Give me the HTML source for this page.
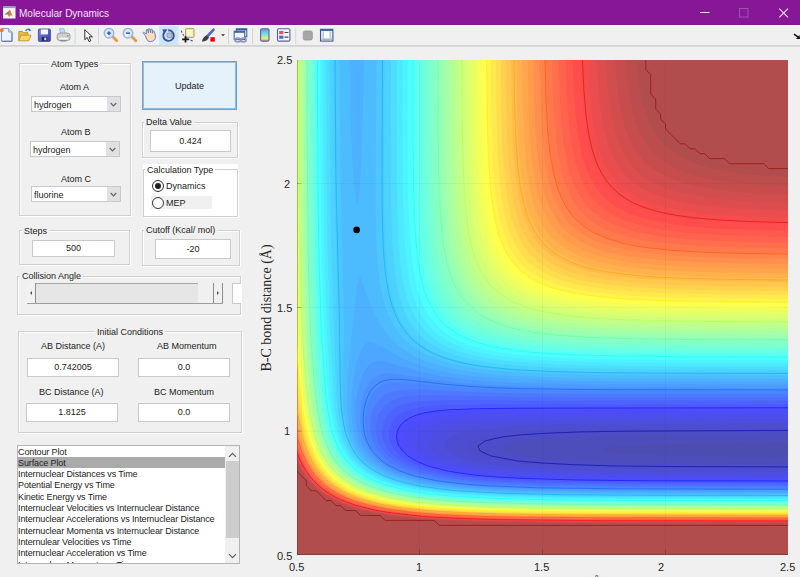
<!DOCTYPE html>
<html><head><meta charset="utf-8"><title>Molecular Dynamics</title>
<style>
*{margin:0;padding:0;box-sizing:border-box}
html,body{width:800px;height:577px;overflow:hidden;background:#f0f0f0;font-family:"Liberation Sans",sans-serif;color:#222}
.abs{position:absolute}
.title{left:0;top:0;width:800px;height:25px;background:#881798}
.ttext{left:19px;top:6px;font-size:10px;line-height:16px;color:#f2e3f4}
.tb{left:0;top:25px;width:800px;height:21px;background:#f0f0f0;border-bottom:1px solid #d9d9d9}
.sep{top:28px;width:1px;height:15px;background:#d0d0d0}
.plot{position:absolute;left:0;top:0}
.lbl{font-size:9px;line-height:10px;white-space:nowrap;color:#222}
.panel{border:1px solid #d0d0d0;box-shadow:inset 1px 1px 0 #fff,1px 1px 0 #fff}
.ptitle{font-size:9px;line-height:10px;background:#f0f0f0;padding:0 2px;white-space:nowrap}
.edit{background:#fff;border:1px solid #c9c9c9;font-size:9px;text-align:center;white-space:nowrap}
.pop{background:#fff;border:1px solid #c6c8d0;font-size:9px;white-space:nowrap}
.pop .arr{position:absolute;right:0;top:0;bottom:0;width:13px;background:#e1e1e1}
.tick{font-size:11px;line-height:12px;color:#262626;white-space:nowrap}
.list{background:#fff;border:1px solid #b4b4b4}
.li{position:absolute;left:0px;font-size:9px;line-height:11px;letter-spacing:-0.12px;white-space:nowrap;color:#222}
</style></head><body>
<div class="abs title"></div>
<div class="abs ttext">Molecular Dynamics</div>
<div class="abs tb"></div>
<svg class="abs" style="left:0;top:0" width="800" height="50" viewBox="0 0 800 50">
<defs>
<linearGradient id="cbar" x1="0" y1="0" x2="0" y2="1">
<stop offset="0" stop-color="#8a84e0"/><stop offset="0.45" stop-color="#6ee6e0"/><stop offset="0.78" stop-color="#f2ea70"/><stop offset="1" stop-color="#f09a5a"/>
</linearGradient>
<linearGradient id="flop" x1="0" y1="0" x2="1" y2="1">
<stop offset="0" stop-color="#7a80e8"/><stop offset="1" stop-color="#3a40a8"/>
</linearGradient>
</defs>
<!-- title icon -->
<rect x="3" y="6.5" width="12.5" height="12" fill="#f6f6f6"/>
<rect x="3" y="6.5" width="12.5" height="1.6" fill="#8aa2b8"/>
<path d="M4.5,14.5 L7.8,12 L9.8,9.5 L12.8,16.5 L11,15 L9,17 L7.6,14.2 Z" fill="#e8782a"/>
<path d="M4.5,14.5 L7.8,12 L9.2,13.2 L7.6,14.2 Z" fill="#3a8ad0"/>
<!-- window buttons -->
<line x1="700" y1="12.5" x2="709.5" y2="12.5" stroke="#f2e2f4" stroke-width="1"/>
<rect x="739.5" y="8.5" width="8.5" height="8.5" fill="none" stroke="#9c55a9" stroke-width="1"/>
<path d="M779.3,8.6 L788,17.3 M788,8.6 L779.3,17.3" stroke="#f2e2f4" stroke-width="1.1"/>
<!-- toolbar top highlight & bottom line -->
<rect x="0" y="25" width="800" height="1.2" fill="#f7f9f7"/>
<rect x="0" y="45.5" width="800" height="1.2" fill="#cfcfcf"/>
<!-- separators -->
<g fill="#d6d6d6"><rect x="74.6" y="28" width="1" height="16"/><rect x="98" y="28" width="1" height="16"/><rect x="228" y="28" width="1" height="16"/><rect x="252" y="28" width="1" height="16"/><rect x="295.2" y="28" width="1" height="16"/></g>
<!-- new doc -->
<path d="M1.5,28.6 H8.6 L12,32 V41 H1.5 Z" fill="#eef4fc" stroke="#8393c4" stroke-width="1"/>
<path d="M12,32.5 V41.5 H2" fill="none" stroke="#6a78ae" stroke-width="1"/>
<path d="M8.6,28.6 V32 H12" fill="#c9d3ea" stroke="#8393c4" stroke-width="0.8"/>
<circle cx="1.8" cy="30.3" r="2" fill="#f07a3a"/>
<!-- open folder -->
<path d="M18.8,40.8 V31.5 H22.5 L23.5,32.7 H28 V35" fill="#e6bd48" stroke="#bf972c" stroke-width="1"/>
<path d="M18.8,40.8 L21,35.2 H31 L28.8,40.8 Z" fill="#fad868" stroke="#c49a30" stroke-width="1"/>
<path d="M25.5,31 Q27.5,28.3 30,29.8" fill="none" stroke="#5a78b8" stroke-width="1.3"/>
<path d="M29,28.6 L31.2,30.3 L28.8,31.6 Z" fill="#4a64a8"/>
<!-- save -->
<rect x="38.4" y="29" width="12" height="12.4" rx="1" fill="url(#flop)" stroke="#3a3e98" stroke-width="0.8"/>
<rect x="40.8" y="29.4" width="7.2" height="5" fill="#f4f5fb"/>
<rect x="41.8" y="37" width="5.5" height="3.8" fill="#23264a"/>
<rect x="44.3" y="37.6" width="2" height="2.6" fill="#d8dae8"/>
<!-- print -->
<path d="M59.3,28.7 H63.8 L65.6,33.5 H60.8 Z" fill="#bcdcf8" stroke="#98b0cc" stroke-width="0.8"/>
<path d="M57.2,35.5 Q57.2,33 60,33 H67 Q70,33 70,35.5 V38.5 Q70,40.5 67.5,40.5 H59.7 Q57.2,40.5 57.2,38.5 Z" fill="#cfcfcf" stroke="#8e8e8e" stroke-width="0.8"/>
<rect x="59.2" y="37.8" width="8.6" height="1.6" fill="#f4f4f4"/>
<rect x="60.5" y="40" width="6" height="1.5" fill="#8a8a8a"/>
<circle cx="67.8" cy="35.8" r="0.8" fill="#3ea04a"/>
<!-- arrow -->
<path d="M84.8,29.7 V39.7 L87.2,37.4 L89,41.6 L90.8,40.8 L89,36.8 H92.4 Z" fill="#fff" stroke="#2e2e2e" stroke-width="1" stroke-linejoin="round"/>
<!-- zoom in -->
<line x1="112.6" y1="36.6" x2="116.8" y2="40.8" stroke="#e69a3e" stroke-width="2.8" stroke-linecap="round"/>
<circle cx="109" cy="33.2" r="4.8" fill="#cbeaf4" stroke="#a8a8e2" stroke-width="1.3"/><circle cx="107.6" cy="35" r="1.6" fill="#f4fbff"/>
<path d="M109,31 L111.2,33.2 L109,35.4 L106.8,33.2 Z" fill="#4a68aa"/>
<!-- zoom out -->
<line x1="131.6" y1="36.6" x2="135.8" y2="40.8" stroke="#e69a3e" stroke-width="2.8" stroke-linecap="round"/>
<circle cx="128" cy="33.2" r="4.8" fill="#cbeaf4" stroke="#a8a8e2" stroke-width="1.3"/><circle cx="126.6" cy="35" r="1.6" fill="#f4fbff"/>
<path d="M126,33.2 H130" stroke="#4866a8" stroke-width="1.6"/>
<!-- pan hand -->
<path d="M145.2,35.3 L143.4,33.6 Q142.6,32.6 143.6,32.2 L146.3,34 V29.8 Q147,28.9 147.8,29.7 L148.4,33 V29 Q149.2,28.1 150,29 L150.6,33 V29.5 Q151.4,28.7 152.2,29.6 L152.6,33.2 V31.3 Q153.4,30.6 154.2,31.4 L155.6,36 Q155.6,41.2 150.6,41.6 H149 Q146.8,41.2 145.2,35.3 Z" fill="#f8dcb8" stroke="#6d7ed0" stroke-width="1" stroke-linejoin="round"/>
<!-- rotate (active) -->
<rect x="159" y="26" width="19.5" height="19" fill="#cde5f8"/>
<path d="M168.2,30.3 A5.3,5.3 0 1 1 164.3,32.4" fill="none" stroke="#3c5494" stroke-width="1.9"/>
<path d="M162.2,29.6 L167.4,29.2 L164.6,34 Z" fill="#3c5494"/>
<path d="M167,33.6 L169.6,32.8 L172,33.6 V37 L169.6,38 L167,37 Z" fill="#b3bfd8" stroke="#6d7cab" stroke-width="0.6"/>
<!-- data cursor -->
<rect x="185.6" y="28.6" width="8.4" height="8.8" rx="1" fill="#eeeaa8" stroke="#a9a060" stroke-width="1"/>
<rect x="187" y="30" width="5.6" height="6" fill="#f8f6d0"/>
<path d="M181.3,30.7 Q183.5,38.5 193.5,41.2" fill="none" stroke="#3c3cf0" stroke-width="1.1" stroke-dasharray="2,1.5"/>
<path d="M182.2,39.4 H188.8 M185.5,36.2 V42.6" stroke="#101010" stroke-width="1.7"/>
<!-- brush -->
<line x1="213.6" y1="29.6" x2="207.6" y2="36" stroke="#5662c4" stroke-width="2.6" stroke-linecap="round"/>
<path d="M206.5,35.3 L209,37.6 Q206.8,41.8 202,41.6 Q202.4,37.4 206.5,35.3 Z" fill="#3e3e3e"/>
<rect x="210.4" y="37.2" width="4.4" height="4.4" fill="#f00000"/>
<path d="M221,34.2 H225 L223,36.3 Z" fill="#333"/>
<!-- link -->
<rect x="236.3" y="28.8" width="10.5" height="8" fill="#e2e9f5" stroke="#3d5aa2" stroke-width="1"/>
<rect x="236.3" y="28.8" width="10.5" height="1.6" fill="#3d5aa2"/>
<rect x="234.2" y="31.2" width="10.5" height="8.5" fill="#f2f5fb" stroke="#3d5aa2" stroke-width="1"/>
<rect x="234.2" y="31.2" width="10.5" height="1.6" fill="#3d5aa2"/>
<ellipse cx="237.8" cy="40" rx="2.8" ry="2" fill="none" stroke="#8594b6" stroke-width="1.4"/>
<ellipse cx="243.5" cy="40" rx="2.8" ry="2" fill="none" stroke="#8594b6" stroke-width="1.4"/>
<!-- colorbar -->
<rect x="260.6" y="28.7" width="8.4" height="12.4" rx="1.4" fill="url(#cbar)" stroke="#55649c" stroke-width="1.1"/>
<!-- legend -->
<rect x="277.5" y="28.7" width="12.4" height="12.4" rx="1.4" fill="#f3f5fa" stroke="#55649c" stroke-width="1.1"/>
<rect x="279.2" y="30.9" width="4.2" height="3.2" fill="#e85454"/>
<rect x="279.2" y="35.6" width="4.2" height="3.2" fill="#5a62e6"/>
<path d="M284.6,32.5 H288.4 M284.6,37.2 H288.4" stroke="#484848" stroke-width="1.2"/>
<!-- hide axes -->
<rect x="303.3" y="31" width="9" height="9" rx="1.6" fill="#a6a6a6" stroke="#959595" stroke-width="0.8"/>
<!-- plot tools -->
<rect x="320.5" y="29.3" width="12.4" height="11.8" fill="#e4e9f3" stroke="#3d5aa2" stroke-width="1.1"/>
<rect x="320.5" y="29.3" width="12.4" height="1.6" fill="#3d5aa2"/>
<rect x="322.6" y="31.6" width="1.4" height="7" fill="#b7c0d6"/>
<rect x="329.4" y="31.6" width="1.4" height="7" fill="#b7c0d6"/>
<rect x="323.8" y="31.6" width="5.6" height="6.2" fill="#ffffff"/>
<rect x="321.5" y="38.6" width="10.4" height="1.6" fill="#b6b6b6"/>
<!-- dock arrow -->
<path d="M794,34.2 L798.5,37.4" stroke="#111" stroke-width="1.6"/>
<path d="M800,39 L796,39 L799.6,35 Z" fill="#111"/>
</svg>
<svg class="plot" width="800" height="577" viewBox="0 0 800 577">
<defs><clipPath id="pc"><rect x="297" y="60" width="491" height="495"/></clipPath></defs>
<g clip-path="url(#pc)">
<g fill-rule="evenodd">
<rect x="296" y="59" width="493" height="497" fill="#4d4db1"/>
<path fill="#4d4dbc" d="M789,556 296,556 296,59 789,59 789,443.4 702.1,444 652,445.1 630,446 616.5,447 608.5,448 604.3,449 603.2,450 604.9,451 609.7,452 618.2,453 632,454 655.4,455 703.4,456 789,456.6 789,556Z"/>
<path fill="#4d4dc7" d="M789,556 296,556 296,59 789,59 789,434.4 646,435.1 600,435.9 567.2,437 540,438.8 521.5,441 515,442.3 509,444 505.1,446 503.6,448 504.3,450 507.1,452 512.3,454 520.6,456 541.9,459 568.4,461 601,462.3 644,463.2 789,464 789,556Z"/>
<path fill="#4d4dd2" d="M789,556 296,556 296,59 789,59 789,428.5 615,429.3 566,430.2 530,431.6 502,434 483.9,437 477,439 471,441.8 468.5,444 467.9,445 467.5,447 469,450 473.1,453 480.1,456 487,458 496.4,460 509.5,462 540,464.8 576,466.5 624,467.5 789,468.4 789,556Z"/>
<path fill="#4d4dde" d="M789,556 296,556 296,59 789,59 789,423.6 594,424.4 543,425.3 507,426.9 480,429.4 470,431 461,433.1 454,435.7 449,438.5 447.3,440 445.9,442 445.1,445 445.5,447 446.6,449 448.4,451 451,453 456.5,456 464.6,459 476,461.9 487.4,464 502.7,466 519,467.5 557,469.6 608,470.8 677,471.5 789,471.7 789,556Z"/>
<path fill="#4d4de9" d="M789,556 296,556 296,59 789,59 789,419.2 578,419.9 525,420.9 490,422.4 464,425 453,427 445,429.1 438,432 433.3,435 431.2,437 429.9,439 429.1,441 428.9,443 429.1,445 430.4,448 433.9,452 439.9,456 449,460 459.1,463 473.5,466 487.2,468 505,469.8 543,472.1 596,473.5 667,474.2 789,474.5 789,556Z"/>
<path fill="#4d4df4" d="M789,556 296,556 296,59 789,59 789,415.1 561,415.9 508,416.8 474,418.3 460,419.5 449,421 439.2,423 431,425.6 424.1,429 420,432.2 417,436.6 416.1,441 416.5,444 417.7,447 421.8,452 428.8,457 437.3,461 447,464.2 460,467.2 476,469.9 493,471.8 532,474.3 587,475.9 662,476.6 789,476.9 789,556Z"/>
<path fill="#4d4dff" d="M789,556 296,556 296,59 789,59 789,411.3 542,412 492,412.8 460,414.2 447,415.4 436,417 427,419.1 419.2,422 413,425.6 409,429.5 406.4,434 405.6,439 405.9,442 406.9,445 408.5,448 410.9,451 416.7,456 425.7,461 436.3,465 448,468.1 463.3,471 482,473.4 500.3,475 522,476.3 577.6,478 656,478.8 789,479.1 789,556Z"/>
<path fill="#4d58ff" d="M789,556 296,556 296,59 789,59 789,407.7 517,408.2 474,408.8 447,410 435,411.2 424.2,413 416,415.3 409.6,418 404,421.7 400,426 397.5,431 396.8,434 396.6,437 397,440.4 398.1,444 400.3,448 402.6,451 405.6,454 409.4,457 418,461.9 428.2,466 442,469.8 457,472.7 474.1,475 493,476.7 514,478.1 571,479.9 650,480.7 789,481 789,556Z"/>
<path fill="#4d63ff" d="M789,556 296,556 296,59 789,59 789,404.2 484,404.4 454,404.8 435,405.6 424,406.8 415,408.4 407,410.9 401,413.8 395.6,418 392,422.6 389.6,428 388.8,434 389.1,438 390.2,442 392,446 393.9,449 399.4,455 403.2,458 407.9,461 418.6,466 431.1,470 446,473.3 464,476.1 482.3,478 505,479.6 532,480.8 562,481.6 643,482.5 789,482.8 789,556Z"/>
<path fill="#4d6eff" d="M789,556 296,556 296,59 789,59 789,400.8 575,400.8 453,400.1 436,400.3 424,400.9 414,402 405,403.9 398,406.6 393,409.5 388.1,414 384.8,419 382.6,425 381.9,431 382.2,436 383.2,440 384.7,444 386.9,448 390,452 392.9,455 400.8,461 411,466.2 424.8,471 440,474.6 458,477.4 476,479.4 498,481.1 524,482.3 556,483.2 637,484.1 789,484.4 789,556Z"/>
<path fill="#4d79ff" d="M789,556 296,556 296,59 789,59 789,397.5 569,397.4 505,396.8 434,395.2 413,395.7 404,396.8 397,398.6 391,401.2 385.5,405 381.1,410 378,416 376.3,422 375.7,429 376.1,434 376.9,438 378.7,443 380.8,447 383.5,451 387.1,455 395,461.3 405.6,467 419,471.9 435,475.8 452,478.6 472,480.9 494,482.6 521,483.8 552,484.7 635,485.7 789,486 789,556Z"/>
<path fill="#4d84ff" d="M789,556 296,556 296,59 789,59 789,394.3 624,394.3 543,393.8 484,392.5 420,389.5 404,389.7 396,390.7 390,392.3 384,395.3 379.6,399 375.7,404 372.7,410 370.8,417 370,425 370.2,430 371.1,435 372.5,440 374.7,445 377.7,450 381,454 385,457.9 388.9,461 393.5,464 399.1,467 411.5,472 426,476 445,479.5 465,482 487,483.8 512,485.1 544,486.1 628,487.1 789,487.4 789,556Z"/>
<path fill="#4d8fff" d="M789,556 296,556 296,59 789,59 789,391.1 611,391 526,390.1 472,388 447,386.3 409,382.7 395,382.5 388,383.5 382,385.6 377,388.9 373.2,393 369.6,399 367,405.9 365.3,414 364.8,422 365.1,428 366,433.3 367.6,439 369.7,444 372.5,449 375.5,453 379.2,457 383.8,461 388.1,464 394,467.4 399.6,470 407,472.8 421.6,477 440,480.6 458.8,483 482.3,485 509,486.4 541,487.4 626,488.5 789,488.8 789,556Z"/>
<path fill="#4d9bff" d="M789,556 296,556 296,59 789,59 789,388 600,387.7 550,387.1 512,386.2 482,384.7 456,382.6 433,379.8 398,374.2 391,373.5 386,373.6 380,374.7 375.1,377 371,380.5 367.7,385 364.4,392 362,399.9 360.5,409 360,418 360.3,425 361.2,431 362.8,437 364.6,442 367.1,447 370.4,452 373.8,456 378,460 383,463.8 388.1,467 393.9,470 401,472.9 416,477.6 433,481.1 453,483.9 475.5,486 503,487.6 535,488.7 622,489.8 789,490.1 789,556Z"/>
<path fill="#4da6ff" d="M789,556 296,556 296,59 789,59 789,384.8 589,384.4 537,383.5 498,382 467,379.5 440.7,376 418,371.2 388,362.6 382,361.5 378,361.4 373,362.6 369,365.1 365.6,369 362.4,375 359.5,383 357.2,393 355.9,403 355.5,413 355.7,420 356.5,427 358,434 360,440 362.2,445 365.1,450 368.9,455 372.7,459 377.4,463 383,466.8 388.8,470 395.4,473 410.4,478 428.4,482 448,484.9 470,487 498,488.7 532,489.9 618,491 789,491.4 789,556Z"/>
<path fill="#4db1ff" d="M789,556 296,556 296,59 789,59 789,381.8 649,381.6 574,381 520,379.5 481,377 465,375.2 450,372.9 436.2,370 424,366.6 413.6,363 403,358.4 377,343.9 373,342.4 370,342.1 368,342.5 366,343.5 363,346.5 360,352.2 357.6,359 355,369.7 353,381.6 351.6,395 351.2,407 351.4,415 352.2,423 353.5,430 355.4,437 357.8,443 360.3,448 363.6,453 367.9,458 372.2,462 377.4,466 384,470 390,472.9 404,478 422,482.4 442,485.6 465.4,488 493,489.7 526,491 614,492.2 789,492.5 789,556Z"/>
<path fill="#4dbcff" d="M789,556 296,556 296,59 349.4,59 350.5,111 352,153.3 354,185.6 356,202.5 357,205.5 358,204.1 359,197.6 361,168 362.9,113 364,59 789,59 789,378.7 625,378.4 579,377.9 543,377 512,375.7 487,373.7 465.3,371 447,367.5 430,362.6 422,359.5 415,356.2 408,352.2 402,348.1 396.9,344 391.7,339 383.5,329 379.6,323 375.7,316 369.5,302 362,280.9 361,278.8 360,277.6 359,278.2 358.3,280 357,286.3 354,311.2 348.6,367 347.4,385 347.1,399 347.3,409 348.1,418 349.3,426 350.9,433 353.2,440 355.9,446 358.9,451 362.6,456 367.3,461 372.1,465 378,469 383.5,472 390.1,475 398.2,478 408,480.9 417,483 436,486.2 460,488.9 488,490.7 520.2,492 610,493.3 789,493.7 789,556Z"/>
<path fill="#4dc7ff" d="M789,556 296,556 296,59 339.3,59 340.5,176 343.6,308 343.7,336 343,384 343.6,405 344.3,414 345.6,423 347.3,431 349.4,438 351.9,444 355.1,450 358.6,455 362.9,460 369.8,466 378,471.3 387.8,476 399,480 411,483.2 425.5,486 441,488.2 460,490.1 503,492.6 561,494 642,494.6 789,494.8 789,556ZM789,375.6 665,375.5 594,374.9 543,373.7 505,371.6 488,370 473,368 460,365.7 448,362.8 437,359.3 428,355.6 419.3,351 411.9,346 405,340 399.6,334 394.7,327 389.8,318 386.2,309 383.2,299 380.6,287 378.8,275 376.7,249 375.7,214 375.7,171 376.5,59 789,59 789,375.6Z"/>
<path fill="#4dd2ff" d="M789,556 296,556 296,59 333.6,59 334.1,140 335,208.2 338.2,329 339.1,381 340,401 341,412 342.2,421 344,429.5 346.2,437 349,444 352.2,450 356.3,456 360.7,461 367.6,467 376,472.4 385.7,477 396.9,481 409,484.2 423.3,487 440,489.3 459,491.2 501,493.6 558,495 640,495.6 789,495.8 789,556ZM789,372.6 669,372.4 599,371.9 549,370.7 511,368.5 494,366.9 479.7,365 467,362.7 455,359.9 444,356.4 435,352.6 426.4,348 419.2,343 412.6,337 407.3,331 402.6,324 398.4,316 394.9,307 391.9,297 389.6,286 387.6,273 385.4,246 384.2,210 384,162 384.4,59 789,59 789,372.6Z"/>
<path fill="#4ddeff" d="M789,556 296,556 296,59 329.3,59 329.9,163 331,236.2 333,306.6 335.4,373 336.6,397 337.8,410 339.3,420 341.2,429 343.5,437 346.3,444 350,451 354.2,457 358.7,462 365.7,468 374,473.3 383.8,478 395.1,482 407,485.2 421.5,488 438,490.3 457,492.2 499,494.6 556,496 639,496.6 789,496.8 789,556ZM789,369.5 672,369.3 603,368.8 553,367.5 516,365.4 500,363.8 485,361.8 472,359.4 461,356.8 450,353.2 441,349.4 432.9,345 426,340.2 420,334.8 414.1,328 409.4,321 405.3,313 401.8,304 398.9,294 396.6,283 394.7,270 392.4,243 391.1,206 390.8,157 391.1,59 789,59 789,369.5Z"/>
<path fill="#4de9ff" d="M789,556 296,556 296,59 325.7,59 326.4,170 327.6,250 330,326.1 333.3,391 334.5,405 336,416.2 337.9,426 340.3,435 343.3,443 346.8,450 351,456.4 356,462.2 363,468.4 371.6,474 382,479 393,482.9 405,486.1 419.9,489 436,491.3 455,493.2 498,495.6 555.5,497 638,497.6 789,497.8 789,556ZM789,366.4 675,366.3 607,365.7 558,364.4 521,362.3 505,360.7 490,358.6 477,356.2 466,353.5 456,350.2 447,346.4 438.9,342 432,337.1 426,331.8 420.2,325 415.5,318 411.5,310 408,301 405.1,291 402.8,280 401,268 398.6,240 397.2,203 396.8,153 397,59 789,59 789,366.4Z"/>
<path fill="#4df4ff" d="M789,556 296,556 296,59 322.7,59 323.3,174 324.5,255 326.8,326 330.1,386 331.5,401 333.2,414 335,424 337.6,434 340.9,443 344.3,450 348.9,457 354,463 361,469.1 370,475 379,479.4 390,483.4 403.3,487 418,489.9 434,492.2 453,494.1 496,496.6 555,498 638,498.6 789,498.7 789,556ZM789,363.4 678,363.2 611,362.6 562,361.3 526,359.2 510,357.6 496,355.7 483,353.3 472,350.5 462,347.3 453,343.6 445,339.3 438,334.4 431.9,329 426.6,323 421.9,316 417.7,308 414.1,299 411.1,289 408.7,278 406.7,265 404.2,237 402.9,200 402.4,150 402.5,59 789,59 789,363.4Z"/>
<path fill="#4dffff" d="M789,556 296,556 296,59 320,59 320.5,179 321.7,259 324,327 327.3,382 328.9,400 330.7,413 332.7,424 335.3,434 338.6,443 342.5,451 347.2,458 352.4,464 360,470.6 368.5,476 378,480.5 389,484.5 402.1,488 417,490.9 433,493.1 452,495 495,497.5 554,498.9 637,499.5 789,499.7 789,556ZM789,360.3 681,360.1 615,359.5 567,358.2 531,356 515,354.5 501,352.5 488,350.1 477,347.4 467,344.2 458,340.4 450,336 443,331.1 437,325.6 431.3,319 426.7,312 422.6,304 419.2,295 416.3,285 414,274 412.1,262 409.6,234 408.1,197 407.6,147 407.7,59 789,59 789,360.3Z"/>
<path fill="#58fff4" d="M789,556 296,556 296,59 317.5,59 318,178 319.2,259 321.3,324 324.7,380 326.3,397 328.1,411 330.3,423 333.1,434 336.4,443 340.2,451 345,458.3 350.8,465 358,471.2 367,476.9 377,481.7 388,485.5 401.1,489 416,491.9 432,494.1 451.4,496 494,498.4 553,499.8 636,500.4 789,500.5 789,556ZM789,357.2 683,357 618,356.4 571,355.1 535,352.9 519,351.2 505,349.3 493,347 482,344.3 472,341 463,337.2 455.3,333 448.2,328 442,322.4 436.5,316 431.9,309 427.8,301 424.3,292 421.5,282 419.1,271 417.2,259 414.7,231 413.2,195 412.6,145 412.6,59 789,59 789,357.2Z"/>
<path fill="#63ffe9" d="M789,556 296,556 296,59 315.3,59 315.8,182 316.9,261 319,325 322.1,376 324,395.7 326,410.9 328.2,423 331,433.8 334.3,443 338.6,452 343.3,459 349,465.6 356.4,472 365,477.5 374.3,482 386,486.2 400,489.9 414,492.6 431,495 451,496.9 494,499.3 553,500.7 635,501.2 789,501.4 789,556ZM789,354.1 686,353.9 622,353.2 575,351.9 540,349.7 524,348.1 510,346.2 498,343.9 487,341.2 477,337.9 468,334.1 460.4,330 453.3,325 447,319.3 442,313.6 437.5,307 433.3,299 429.7,290 426.7,280 424.3,269 422.3,257 419.7,229 418.1,193 417.5,144 417.5,59 789,59 789,354.1Z"/>
<path fill="#6effde" d="M789,556 296,556 296,59 313.2,59 313.7,183 314.8,263 316.8,326 320,375.9 321.9,395 323.9,410 326,422 329,433.7 332.3,443 336.6,452 341.1,459 347,466 354,472.1 362.9,478 373.2,483 384.3,487 397,490.4 412,493.4 429,495.8 448,497.6 490,500.1 550,501.5 632,502.1 789,502.3 789,556ZM789,351 687,350.7 624,350.1 578,348.7 543,346.4 528,344.9 514,342.9 502,340.6 491,337.8 481,334.5 472.9,331 465,326.7 458,321.8 451.7,316 446.5,310 441.9,303 438,295.6 434.6,287 431.6,277 429.1,266 427.2,254 424.5,226 422.9,190 422.2,141 422.2,59 789,59 789,351Z"/>
<path fill="#79ffd2" d="M789,556 296,556 296,59 311.2,59 311.8,195 313.1,279 314.3,314 315.9,347 317.9,375 320.2,397 322,410 324,421.3 326.3,431 329.2,440 332.5,448 336.3,455 340.5,461 345.7,467 353,473.3 361.8,479 372.3,484 383.6,488 396,491.3 411,494.2 428,496.6 447,498.5 491,501 549,502.3 633,502.9 789,503.1 789,556ZM789,347.8 691,347.6 629,346.9 583,345.5 548,343.3 533,341.7 519,339.8 507,337.5 496,334.7 487,331.8 478,328 470,323.7 463,318.8 456.6,313 451.4,307 447,300.5 443,292.9 439.4,284 436.3,274 433.9,263 431.9,251 429.2,223 427.6,187 426.9,139 426.8,59 789,59 789,347.8Z"/>
<path fill="#84ffc7" d="M789,556 296,556 296,59 309.4,59 310,196 311.2,279 312.4,314 313.9,345 315.9,373 318,394.4 320,409 321.9,420 324.3,430 327,439 330.2,447 334.4,455 339,461.8 344,467.4 351.5,474 360,479.5 369.1,484 381,488.4 394.3,492 409.6,495 426,497.3 445,499.2 488,501.7 547,503.1 631,503.7 789,503.9 789,556ZM789,344.6 692,344.4 631,343.7 586,342.3 551,340 536,338.3 522,336.3 510,333.9 499,331 490,327.9 481,324 473.9,320 467,315 461,309.5 456,303.7 451.5,297 447.3,289 444,280.7 441.1,271 438.6,260 436.6,248 433.9,221 432.2,185 431.5,137 431.3,59 789,59 789,344.6Z"/>
<path fill="#8fffbc" d="M789,556 296,556 296,59 307.7,59 308.2,194 309.4,278 310.5,313 312,343 313.8,370 316,392 317.9,407 320,419 322.5,430 325.2,439 328.8,448 332.5,455 337.2,462 342.4,468 349.2,474 358.2,480 368.3,485 379.2,489 392,492.5 407,495.5 424,498 443.9,500 487,502.5 547,503.9 631,504.5 789,504.6 789,556ZM789,341.4 694,341.1 634,340.4 589,339 555,336.7 540,335 527,333.1 515,330.8 504.4,328 495,324.9 486.1,321 478.9,317 472,312.1 466.3,307 461,301 456.2,294 452,286 448.8,278 445.7,268 443.2,257 441.2,245 438.4,218 436.8,182 436,135 435.8,59 789,59 789,341.4Z"/>
<path fill="#9bffb1" d="M789,556 296,556 296,59 306.1,59 306.6,195 307.8,278 310.1,340 312,368 314,389.5 316,405 318.1,418 320.6,429 323.5,439 327.1,448 331.3,456 336.1,463 341.4,469 349,475.6 357.4,481 367.7,486 378.8,490 392,493.6 407,496.5 424.8,499 444,500.9 487,503.3 547,504.6 631,505.2 789,505.4 789,556ZM789,338.2 697,337.9 638,337.1 594,335.7 560,333.5 545,331.8 532,329.9 520,327.6 509,324.8 500,321.8 491,317.9 483.9,314 476.8,309 470.2,303 465,297 460.4,290 456.7,283 453.1,274 450.4,265 448,254.9 445.9,243 443.1,216 441.3,181 440.5,134 440.3,59 789,59 789,338.2Z"/>
<path fill="#a6ffa6" d="M789,556 296,556 296,59 304.5,59 305,194 306.1,275 308.4,338 310,363.5 312.1,387 314.1,403 316.3,417 319,429 321.9,439 325.4,448 329.5,456 334.2,463 340,469.6 347.3,476 356.6,482 367,486.9 378.4,491 391,494.3 406,497.3 424,499.8 443,501.6 486,504 546,505.4 631,506 789,506.1 789,556ZM789,334.9 699,334.6 640,333.8 596,332.3 563,330 548,328.3 535,326.4 523.3,324 513,321.3 503.4,318 495,314.3 487.4,310 481,305.4 475,300 469.8,294 465.1,287 461,279.1 457.8,271 454.7,261 452.4,251 450.4,239 447.5,212 445.8,178 445,132 444.8,59 789,59 789,334.9Z"/>
<path fill="#b1ff9b" d="M789,556 296,556 296,59 303.1,59 303.5,193 304.6,275 306.8,337 308.3,362 310.2,384 312.1,400 314.4,415 317,427.3 320,438 323.8,448 327.8,456 333,463.8 338.4,470 345.2,476 354.2,482 364.3,487 376,491.3 389.6,495 404.9,498 422,500.4 441,502.3 485,504.7 543,506.1 628,506.7 789,506.9 789,556ZM789,331.5 701,331.2 643,330.4 600,329 567,326.6 552,324.9 539,322.9 527,320.5 517,317.8 508,314.7 499.6,311 492,306.7 485.4,302 479.9,297 474.7,291 470,284.2 466,276.7 462.4,268 459.6,259 457,248 455,236.5 452.1,210 450.4,176 449.5,130 449.2,59 789,59 789,331.5Z"/>
<path fill="#bcff8f" d="M789,556 296,556 296,59 301.6,59 302.1,192 303.1,275 305.2,336 306.8,362 308.8,384 310.8,401 313,415.3 315.7,428 318.8,439 322.7,449 326.8,457 332,464.8 337.5,471 345,477.5 353.5,483 363.8,488 375,492.1 389,495.8 404,498.7 420.1,501 440.3,503 484,505.4 544,506.8 629,507.4 789,507.6 789,556ZM789,328.2 703,327.8 646,327 604,325.6 571,323.2 557,321.6 544,319.6 532,317.2 522,314.5 512,311.1 504,307.5 497,303.6 490,298.6 484,293.1 479,287.3 474.7,281 470.4,273 467.1,265 464.2,256 461.8,246 459.7,234 456.7,208 454.9,174 454,129 453.7,59 789,59 789,328.2Z"/>
<path fill="#c7ff84" d="M789,556 296,556 296,59 300.3,59 300.7,193 301.7,274 303.7,334 305.1,358 307,380.7 309,398.5 311.2,413 314,427 317,438 320.7,448 325,456.7 330,464.4 336,471.3 343.7,478 353,484 363.5,489 374.7,493 387,496.3 402,499.3 420,501.8 439,503.7 482,506.1 542,507.5 626,508.1 789,508.2 789,556ZM789,324.7 705,324.4 649,323.6 607,322.1 574,319.6 560,318 547.5,316 536,313.6 526,310.9 517,307.8 508.4,304 501,299.8 494.3,295 488.9,290 483.6,284 479,277.2 475,269.7 471.5,261 468.6,252 466.2,242 464.1,230 461.2,204 459.4,170 458.5,126 458.2,59 789,59 789,324.7Z"/>
<path fill="#d2ff79" d="M789,556 296,556 296,59 299,59 299.4,191 300.3,272 302.3,332 303.7,357 305.5,379 307.4,397 309.8,413 312.4,426 315.6,438 319.2,448 323.6,457 328.8,465 334.9,472 342,478.2 351,484.2 361,489.1 373,493.5 386.1,497 401.3,500 418,502.4 438,504.3 482,506.8 541,508.2 627,508.8 789,508.9 789,556ZM789,321.3 707,320.9 652,320.1 611,318.5 579,316.2 565,314.5 552,312.5 541,310.2 531,307.5 522,304.5 514,301 506.7,297 499.5,292 493.9,287 488.6,281 484,274.4 480,267 476.6,259 473.6,250 471.1,240 468.9,228 465.9,202 464,169 463,125 462.7,59 789,59 789,321.3Z"/>
<path fill="#deff6e" d="M789,556 296,556 296,59 297.7,59 298.2,203 299.4,288 301.2,337 304,377.6 306,396.3 308.3,412 311,426 314.2,438 318,448.5 322.7,458 328,466 334,472.9 341.1,479 350.3,485 360.6,490 371.6,494 385,497.6 400,500.6 416.8,503 437,505 481,507.5 541,508.8 626,509.4 789,509.6 789,556ZM789,317.7 709,317.3 655,316.5 615,315 583,312.6 556.9,309 545,306.5 535,303.8 526,300.7 517.7,297 510.6,293 504,288.3 498.1,283 492.8,277 488.1,270 484.3,263 481,255 478.1,246 475.6,236 473.5,225 470.6,200 468.6,167 467.6,124 467.3,59 789,59 789,317.7Z"/>
<path fill="#e9ff63" d="M789,556 296,556 296,59 296.5,59 296.9,196 297.9,276 299.7,332 302.5,375 304.6,395 307,412 309.7,426 312.9,438 316.8,449 321.2,458 326.4,466 332.4,473 340.5,480 349,485.5 359,490.4 371,494.8 384,498.3 399,501.2 417,503.8 436,505.7 479,508.1 540,509.5 625,510.1 789,510.2 789,556ZM789,314.1 712,313.7 659,312.9 618,311.3 587,308.9 573,307.2 561,305.3 550,303 540,300.3 531,297.2 523,293.7 516,289.9 509,285 503.3,280 498,274 493.1,267 489.3,260 485.9,252 482.9,243 480.4,233 478.3,222 475.2,197 473.3,164 472.2,122 471.8,59 789,59 789,314.1Z"/>
<path fill="#f4ff58" d="M789,310.4 713,310 661,309.1 621,307.5 590,305.1 576,303.3 564,301.3 553,298.9 543,296.1 534.3,293 527,289.7 520,285.8 513.3,281 507.7,276 502.4,270 498,263.7 494,256.4 490.8,249 487.8,240 485.2,230 483,219 480,194 478,162 476.9,120 476.5,59 789,59 789,310.4ZM789,556 296,556 296,229.3 297.1,294 299.1,344 302.2,385 304.2,402 306.6,417 309.1,429 312.2,440 315.9,450 319.8,458 324.2,465 329.9,472 336.2,478 342.9,483 351.5,488 360.3,492 371.9,496 383.4,499 398,501.9 412.6,504 430,505.9 449,507.3 492,509.2 551,510.3 634,510.7 789,510.9 789,556Z"/>
<path fill="#ffff4d" d="M789,306.7 715,306.3 664,305.3 625,303.7 594,301.2 569,297.6 558,295.2 548,292.5 539,289.2 531.8,286 524.7,282 518,277.2 512.2,272 507,266.1 502.8,260 498.9,253 495.4,245 492.4,236 490,226.7 487.9,216 484.7,191 482.8,160 481.6,119 481.2,59 789,59 789,306.7ZM789,556 296,556 296,296.5 297.9,345 300.7,382 304.5,412 306.9,425 309.4,435 312.2,444 315.9,453 320,460.8 324.2,467 329.2,473 335.6,479 342.5,484 349.3,488 357.9,492 368,495.7 379,498.8 391,501.4 405,503.7 420,505.6 457,508.4 500,510.1 559,511 789,511.5 789,556Z"/>
<path fill="#fff44d" d="M789,302.9 717,302.4 667,301.5 628,299.8 598,297.3 573,293.6 562,291.2 553,288.7 544,285.5 536.3,282 529.2,278 523,273.6 517,268.2 512.4,263 508,256.9 504,249.8 500.5,242 497.4,233 495,223.8 492.8,213 489.7,189 487.6,158 486.4,117 485.9,59 789,59 789,302.9ZM789,556 296,556 296,329.3 298.3,368 301.5,400 303.5,413 305.7,425 308.2,435 311,444.1 314.1,452 318,459.7 322,466 327,472.3 332.8,478 339,482.9 345.4,487 353.2,491 363,494.9 372.7,498 384,500.8 395.5,503 409,505 425,506.8 462,509.3 505,510.8 562,511.6 789,512.1 789,556Z"/>
<path fill="#ffe94d" d="M789,299 719,298.5 670,297.5 633,295.9 603,293.5 578,289.8 567,287.4 558,284.8 549,281.6 541,278 534,274 528,269.8 522.6,265 517.2,259 512.9,253 508.9,246 505.4,238 502.3,229 499.9,220 497.7,209 494.5,185 492.4,154 491.3,115 490.8,59 789,59 789,299ZM789,556 296,556 296,351 298.6,384 302,411.1 304,422.3 306.5,433 309.1,442 312,450 315.2,457 319.3,464 323.6,470 329,476 334.7,481 341,485.5 348,489.5 355.5,493 364,496.2 374,499.2 386,502 398,504.2 411.1,506 428,507.8 464,510.1 507,511.5 564,512.3 789,512.7 789,556Z"/>
<path fill="#ffde4d" d="M789,295 721,294.5 673,293.5 636,291.8 607,289.4 583,285.8 572,283.4 563,280.9 554,277.7 546,274.1 539,270.1 533,265.8 527.5,261 522.1,255 517.8,249 513.9,242 510.3,234 507.5,226 505,216.7 502.8,206 499.6,182 497.5,152 496.2,113 495.7,59 789,59 789,295ZM789,556 296,556 296,367.2 299,397.8 302.8,422 305,432 307.6,441 310.4,449 313.5,456 317.3,463 321.4,469 326,474.5 331,479.3 337,484 343.3,488 351,492 358.1,495 367,498 377.9,501 389,503.3 402,505.5 432,508.8 468,510.9 510,512.1 568,512.9 789,513.3 789,556Z"/>
<path fill="#ffd24d" d="M789,290.9 722,290.4 675,289.3 639,287.6 610,285.1 586,281.3 575.8,279 566,276.1 557.6,273 550,269.4 543,265.3 537.1,261 531.7,256 527,250.7 522.9,245 518.9,238 515.4,230 512.6,222 510,212.5 507.8,202 504.7,179 502.5,149 501.3,111 500.7,59 789,59 789,290.9ZM789,556 296,556 296,379.9 299,406 303,428.1 305.2,437 308,445.7 311,453.3 314.3,460 318,466.1 322.4,472 327,477 332.7,482 338.2,486 344.9,490 352,493.4 360,496.6 369,499.5 379,502 391,504.4 404,506.5 433,509.5 470,511.6 513,512.8 569,513.5 789,513.9 789,556Z"/>
<path fill="#ffc74d" d="M789,286.7 724,286.2 678,285.1 642,283.3 614,280.7 590.4,277 580,274.6 571,271.9 563,268.9 555,265.2 548,261 542.5,257 537,252 532.5,247 528.2,241 524.2,234 520.6,226 517.8,218 515.3,209 513.2,199 509.9,176 507.7,147 506.5,110 505.8,59 789,59 789,286.7ZM789,556 296,556 296,390.4 299.3,415 303.6,435 306,443.2 308.8,451 312,458 315.4,464 319.5,470 323.6,475 328.7,480 333.6,484 339.6,488 346.9,492 353.5,495 361.6,498 371,500.8 381,503.2 405,507.3 434,510.2 471,512.2 513,513.4 569,514.1 789,514.5 789,556Z"/>
<path fill="#ffbc4d" d="M789,282.4 727,281.8 682,280.8 647,279 619,276.4 606,274.6 595,272.6 585,270.2 576,267.5 568,264.5 560.4,261 554,257.2 548,252.9 542.5,248 538,243 533.6,237 529.6,230 526.3,223 523.4,215 520.8,206 518.6,196 515.3,173 513.1,145 511.8,109 511.1,59 789,59 789,282.4ZM789,556 296,556 296,399.2 299.6,422 303.9,440 306.6,448 309.4,455 312.4,461 316,466.9 319.7,472 324.1,477 329.5,482 334.8,486 341,489.9 347,493 354,496.1 362.1,499 371,501.6 381.2,504 392,506 406,508.1 436.4,511 473,512.9 515,514 572,514.6 789,515 789,556Z"/>
<path fill="#ffb14d" d="M789,278 729,277.4 685,276.3 651,274.5 623,271.9 600,268.1 590,265.7 581,263 573,260 566,256.7 559,252.6 553,248.2 548,243.7 542.9,238 538.6,232 535,225.7 531.5,218 528.6,210 526,201 524,191.7 520.8,170 518.5,142 517.1,107 516.4,59 789,59 789,278ZM789,556 296,556 296,406.8 299.6,427 304.1,444 307,452 309.7,458 313,464.1 316.9,470 321,475.1 325.8,480 330.5,484 336.1,488 343,492 349,494.9 364,500.4 373.5,503 384,505.3 408.2,509 438,511.7 474,513.5 516,514.6 572,515.2 789,515.6 789,556Z"/>
<path fill="#ffa64d" d="M789,273.4 732,272.8 689,271.7 655,269.9 628,267.3 606,263.7 596,261.3 587,258.6 579,255.7 571.2,252 564.4,248 558.9,244 553.3,239 548.8,234 544.4,228 540.9,222 537.6,215 534.6,207 531.9,198 529.6,188 526.3,166 524.1,139 522.7,105 521.9,59 789,59 789,273.4ZM789,556 296,556 296,413.3 299.9,433 304.4,448 307,454.6 310.1,461 313.6,467 317.1,472 321.4,477 326,481.5 331.6,486 337,489.6 343.1,493 349.5,496 365,501.5 374.6,504 385,506.2 410,509.8 439,512.4 475,514.1 517,515.2 574,515.8 789,516.1 789,556Z"/>
<path fill="#ff9b4d" d="M789,268.8 733,268.1 691,266.9 658,265 632,262.4 620,260.6 609,258.4 599.2,256 591,253.4 583,250.3 576.2,247 570,243.3 564.1,239 559,234.4 554.2,229 550,223.2 546.4,217 543.1,210 540.1,202 537.5,193 535.4,184 532,162 529.8,136 528.4,103 527.6,59 789,59 789,268.8ZM789,556 296,556 296,419.1 300,437.3 304.8,452 310.6,464 314,469.4 318,474.6 322,479 327,483.6 332,487.4 337.6,491 350,497.1 357.8,500 366,502.5 386,507 411,510.6 440,513 477,514.8 520,515.8 575,516.3 789,516.7 789,556Z"/>
<path fill="#ff8f4d" d="M789,263.9 735,263.2 695,262 663,260.2 637,257.5 615,253.7 605,251.2 597,248.7 589,245.6 582,242.2 576,238.6 570,234.3 565,229.8 560,224.2 556,218.7 552.1,212 548.8,205 546,197.6 543.5,189 541.4,180 538,159 535.7,134 534.2,102 533.4,59 789,59 789,263.9ZM789,556 296,556 296,424.2 300,441 305,455 308,461.3 311.3,467 314.7,472 318.8,477 323,481.3 328,485.6 333,489.1 339,492.7 352,498.7 367,503.5 387.8,508 411,511.2 441,513.7 477,515.3 519,516.3 575,516.8 789,517.2 789,556Z"/>
<path fill="#ff844d" d="M789,258.9 737,258.2 698,256.9 666.4,255 641,252.2 620,248.5 610.2,246 602,243.4 594,240.2 587.5,237 581,233 576,229.3 571.2,225 566.6,220 562.1,214 558.5,208 555.2,201 552.4,194 549.9,186 547.7,177 544.3,157 541.9,132 540.3,100 539.4,59 789,59 789,258.9ZM789,556 296,556 296,428.8 300,444.1 305.3,458 311.4,469 315,474 319.4,479 323.5,483 328.4,487 334,490.8 339.6,494 353,499.9 368,504.5 389,508.8 413.1,512 442,514.3 479,515.9 521,516.8 576,517.4 789,517.7 789,556Z"/>
<path fill="#ff794d" d="M789,253.7 739,252.9 701,251.7 671,249.7 646,246.9 625,243.1 616,240.8 608,238.2 601,235.4 594,232 587.3,228 582,224.1 577,219.5 572.8,215 568.4,209 564.8,203 561.4,196 558.6,189 556.1,181 554,172.5 550.5,152 548.1,128 546.5,98 545.6,59 789,59 789,253.7ZM789,556 296,556 296,433 300.3,448 305.7,461 309,467 312.3,472 320,480.9 329,488.5 340,495.1 353,500.7 368,505.2 388,509.3 413,512.6 443,514.9 479,516.5 521,517.4 577,517.9 789,518.2 789,556Z"/>
<path fill="#ff6e4d" d="M789,248.3 742,247.5 705,246.2 676,244.3 652,241.6 632,237.9 623,235.6 614.8,233 607.2,230 600.9,227 595,223.5 589,219.2 584,214.8 579.5,210 575.6,205 571.8,199 568.3,192 565.5,185 563,177.5 560.8,169 557.3,150 554.7,126 553,97 552,59 789,59 789,248.3ZM789,556 296,556 296,436.7 300.4,451 305.7,463 312,473.1 316,478 320,482.2 329,489.5 340.1,496 354,501.8 369,506.1 389,510.1 414,513.3 443,515.5 479.6,517 522,517.9 577,518.4 789,518.7 789,556Z"/>
<path fill="#ff634d" d="M789,242.7 745,241.9 710,240.6 682,238.7 658,235.9 638,232.2 629,229.9 621,227.3 614,224.6 607,221.2 601,217.6 596,214 591,209.7 586.5,205 582.6,200 578.7,194 575.6,188 572.6,181 570,173.4 567.7,165 564.1,146 561.5,123 559.7,95 558.7,59 789,59 789,242.7ZM789,556 296,556 296,440.2 300.6,454 306,465.5 309.4,471 313,475.8 320.7,484 329.8,491 341,497.3 355,502.8 369.8,507 390.9,511 415.9,514 445,516.1 481,517.6 523,518.4 579,518.9 789,519.2 789,556Z"/>
<path fill="#ff584d" d="M789,236.9 746.4,236 713,234.6 686,232.7 663,229.9 643,226 627,221.3 614,215.5 608,212 602.5,208 597.9,204 593.1,199 589,193.6 585.4,188 582.3,182 579.4,175 574.7,160 571.2,142 568.5,120 566.7,93 565.6,59 789,59 789,236.9ZM789,556 296,556 296,443.4 300.9,457 306.5,468 309.7,473 313.6,478 321.7,486 331.4,493 342.9,499 356.3,504 371,507.9 392,511.8 416,514.6 445,516.6 481,518.1 524,518.9 578,519.4 789,519.7 789,556Z"/>
<path fill="#ff4d4d" d="M789,230.8 748,229.8 716,228.4 690,226.4 668,223.6 649,219.7 633.4,215 626.2,212 620.2,209 615,205.9 609.6,202 605,198 600.3,193 596.4,188 593,182.8 589.9,177 586.9,170 582.1,155 578.6,138 575.9,117 574,91 572.8,59 789,59 789,230.8ZM789,556 296,556 296,446.3 300.8,459 306.7,470 313.4,479 321.6,487 331.6,494 343,499.8 356,504.6 371,508.6 391,512.2 416,515.1 445,517.1 482,518.6 524,519.4 580,519.9 789,520.2 789,556Z"/>
<path fill="#f44d4d" d="M789,224.3 751,223.4 720,221.9 695,219.8 673.8,217 656,213.4 641,208.8 634.3,206 628,202.9 622,199.3 617,195.7 612,191.3 608,187.1 604,182 600.7,177 597.5,171 594.8,165 590,150.6 586.4,134 583.7,114 581.7,90 580.4,59 789,59 789,224.3ZM789,556 296,556 296,449.1 300.7,461 306.3,471 313.1,480 321.5,488 331,494.5 342,500.1 355.1,505 371,509.2 392,512.9 416,515.6 445,517.7 481,519.1 524,519.9 578,520.4 789,520.7 789,556Z"/>
<path fill="#e94d4d" d="M789,217.6 753,216.6 724,215 700,212.9 680,210.1 663,206.6 648,201.9 641.1,199 635.2,196 625,189.3 620.1,185 616.2,181 612.2,176 609,171.2 606,165.9 603,159.5 598.3,146 594.6,130 591.8,111 589.8,88 588.4,59 789,59 789,217.6ZM789,556 296,556 296,451.7 300.8,463 306.6,473 313.8,482 322,489.4 332,496 343,501.3 356.2,506 372,510 393,513.6 417,516.3 446,518.2 483,519.6 525,520.4 580,520.9 789,521.1 789,556Z"/>
<path fill="#de4d4d" d="M789,210.5 755,209.4 728,207.8 705,205.6 686,202.8 669,199.1 655,194.5 643,188.9 633,182.2 628.2,178 624.3,174 620.3,169 617,164.1 611.3,153 606.7,140 603.1,125 600.3,107 598.2,85 596.7,59 789,59 789,210.5ZM789,556 296,556 296,454.1 301,465.3 307,475 314,483.3 322.9,491 333,497.4 345,502.9 358,507.2 373,510.8 394,514.3 419,517 448,518.8 483,520.1 526,520.9 580,521.3 789,521.6 789,556Z"/>
<path fill="#d24d4d" d="M789,203 758,201.8 732,200.1 711,198 692,195 676,191.3 663,186.9 652,181.8 641.7,175 637.1,171 633.2,167 626.4,158 620.5,147 616,135 612.2,120 609.3,103 607.2,83 605.6,59 789,59 789,203ZM789,556 296,556 296,456.3 301,467.1 307.4,477 314.5,485 323,492 332.7,498 344,503.2 358,507.8 373,511.4 394,514.8 418,517.4 447,519.3 484,520.6 581,521.8 789,522.1 789,556Z"/>
<path fill="#c74d4d" d="M789,194.9 761,193.7 737,192 717,189.8 699.7,187 685,183.5 671.6,179 661,174 651,167.4 643,160 636,151.1 630.4,141 625.6,129 622,115.8 619,99.6 616.7,81 615.1,59 789,59 789,194.9ZM789,556 296,556 296,458.5 301.2,469 307.2,478 314.5,486 323.1,493 333.1,499 344.3,504 357,508.2 373.1,512 394,515.4 419,518 449,519.8 484,521.1 580,522.3 789,522.5 789,556Z"/>
<path fill="#bc4d4d" d="M789,186.3 763,185 741,183.2 722,180.9 706,178 692,174.5 680,170.2 669.4,165 660.5,159 652.8,152 646,143.4 640.6,134 636,123 632.2,110 629.4,96 627,79 625.2,59 789,59 789,186.3ZM789,556 296,556 296,460.5 301.4,471 307.8,480 315,487.5 323.2,494 333.5,500 345.2,505 358,509.1 374,512.7 395,516 420,518.5 445,520.1 485,521.6 582,522.7 789,523 789,556Z"/>
<path fill="#b14d4d" d="M789,177.1 766,175.7 746,173.9 729,171.6 714,168.7 701,165.3 689.4,161 679.4,156 671,150.4 663.9,144 657.3,136 651.8,127 647.3,117 643.5,105 640.5,92 638.1,77 636.2,59 789,59 789,177.1ZM789,556 296,556 296,462.4 301.7,473 307.6,481 315,488.6 324,495.4 333,500.5 344,505.3 360,510.3 374,513.4 393,516.4 423,519.4 459,521.4 493,522.4 595,523.4 789,523.6 789,556Z"/>
</g>
<g stroke="#000" stroke-opacity="0.035" stroke-width="1"><line x1="419.5" y1="59.6" x2="419.5" y2="555.1"/><line x1="296.5" y1="431.2" x2="788.5" y2="431.2"/><line x1="542.5" y1="59.6" x2="542.5" y2="555.1"/><line x1="296.5" y1="307.4" x2="788.5" y2="307.4"/><line x1="665.5" y1="59.6" x2="665.5" y2="555.1"/><line x1="296.5" y1="183.5" x2="788.5" y2="183.5"/></g>
<g stroke="#262626" stroke-opacity="0.3" stroke-width="1"><line x1="296.5" y1="555.1" x2="296.5" y2="550.1"/><line x1="296.5" y1="555.1" x2="301.5" y2="555.1"/><line x1="419.5" y1="555.1" x2="419.5" y2="550.1"/><line x1="296.5" y1="431.2" x2="301.5" y2="431.2"/><line x1="542.5" y1="555.1" x2="542.5" y2="550.1"/><line x1="296.5" y1="307.4" x2="301.5" y2="307.4"/><line x1="665.5" y1="555.1" x2="665.5" y2="550.1"/><line x1="296.5" y1="183.5" x2="301.5" y2="183.5"/><line x1="788.5" y1="555.1" x2="788.5" y2="550.1"/><line x1="296.5" y1="59.6" x2="301.5" y2="59.6"/><line x1="297.5" y1="60" x2="297.5" y2="555"/><line x1="297" y1="554.5" x2="788" y2="554.5"/></g>
<g stroke-linejoin="round">
<path fill="none" stroke="#0000af" stroke-opacity="0.65" stroke-width="0.9" d="M788.5,466.9 680.3,466.6 611.4,465.9 572,464.6 542.5,463 517.6,461 491.2,456 480.1,451 477.9,446.1 484.7,441.1 493.3,438.9 503.1,436.9 522.8,434.7 547.4,433.2 581.9,431.9 621.2,431.2 788.5,430.4"/>
<path fill="none" stroke="#0010ff" stroke-opacity="0.65" stroke-width="0.9" d="M788.5,481 653,480.8 576.9,480 522.8,478.4 498.2,477.1 478.5,475.5 463.8,473.6 446.6,470.9 427.8,465.9 415.9,461 407.9,456 402.5,451 399,446.1 397.1,441.1 396.5,436.2 397.3,431.2 399.7,426.3 404.3,421.3 409.7,417.9 414.6,415.7 424.4,412.9 434.3,411.2 449,409.8 473.6,408.8 517.9,408.2 788.5,407.7"/>
<path fill="none" stroke="#0060ff" stroke-opacity="0.65" stroke-width="0.9" d="M788.5,489.2 626.1,488.9 537.6,487.8 483.5,485.6 458.9,483.5 437.2,480.8 414,475.8 399.8,471 389.4,465.9 382,461 375.2,454.5 372.4,451 369.2,446.1 366.8,441.1 365.1,436.2 364,431.2 363,421.3 363.6,411.4 365.4,402.7 367.7,396.5 370.3,391.4 375.2,385.5 380.1,382.2 385.1,380.4 390,379.5 394.9,379.3 404.7,379.7 444.1,384.2 468.7,386.3 493.3,387.7 522.8,388.7 611.4,389.8 788.5,389.9"/>
<path fill="none" stroke="#00afff" stroke-opacity="0.65" stroke-width="0.9" d="M788.5,495.5 640.9,495.3 562.2,494.7 503.1,493.3 456.3,490.7 439.2,488.8 419.5,486 397.6,480.8 384.1,475.8 375.2,471.3 367.1,465.9 361.5,461 357.1,456 353.6,451 350.6,445.8 346.7,436.2 345.2,431.2 343.1,421.3 341.7,411.4 340.9,401.5 340.2,381.7 339.4,317.3 336,183.5 335,59.6M382.5,59.6 382,163.7 382.2,213.2 383.3,247.9 384.4,262.8 386,277.6 388.6,292.5 391.1,302.4 392.7,307.4 396.6,317.3 402.1,327.2 405.7,332.1 410,337.1 415.3,342 419.5,345.3 424.4,348.6 434.3,353.8 444.1,357.8 457.9,361.9 468.7,364.2 483.5,366.6 513,369.6 552.3,371.6 601.5,372.7 670.4,373.2 788.5,373.4"/>
<path fill="none" stroke="#10ffef" stroke-opacity="0.65" stroke-width="0.9" d="M788.5,500.6 636,500.5 552.3,499.8 493.3,498.4 449,495.9 429.3,493.8 409.7,490.9 388.2,485.7 374.6,480.8 365.4,476.2 357.4,470.9 351.5,465.9 345.7,459.4 340.8,452.2 337.6,446.1 333.7,436.2 330.8,426.3 328.1,411.4 326,396.5 324.7,381.7 321.1,325.3 319.1,262.8 317.9,183.5 317.4,59.6M413.1,59.6 413.1,143.8 413.7,193.4 415,228.1 416.1,242.9 417.6,257.8 420,272.7 422.2,282.6 425.1,292.5 429.1,302.4 434.3,311.7 438.2,317.3 442.6,322.2 448,327.2 454.9,332.1 463.8,337 478.5,342.8 488.4,345.5 503.1,348.5 517.9,350.7 532.7,352.3 567.1,354.5 616.3,356 680.3,356.7 788.5,356.9"/>
<path fill="none" stroke="#60ff9f" stroke-opacity="0.65" stroke-width="0.9" d="M788.5,504.9 636,504.8 552.3,504.2 493.3,503 446.4,500.6 429.3,498.9 409.7,496.4 394.9,493.6 383.1,490.7 368.7,485.7 360.5,481.8 350.6,475.9 344.5,470.9 339.6,465.9 335.6,461 332.3,456 327.2,446.1 323.6,436.2 320.8,426.3 317.9,411.4 315.7,396.5 313.7,376.7 310.6,332.1 308.5,267.7 307.5,188.4 307,59.6M437.9,59.6 438.1,133.9 438.8,178.5 440.3,213.2 441.5,228.1 443.2,242.9 446.9,262.8 449.6,272.7 453.3,282.6 458.4,292.5 461.6,297.4 468.7,305.7 473.6,310.2 478.5,313.8 488.4,319.5 498.2,323.7 508.1,327 517.9,329.4 532.2,332.1 557.3,335.2 591.7,337.5 636,338.9 695,339.6 788.5,339.9"/>
<path fill="none" stroke="#afff50" stroke-opacity="0.65" stroke-width="0.9" d="M788.5,508.7 636,508.6 552.3,508.1 493.3,507 449,505 429.3,503.3 409.7,501.1 394.9,498.6 381.2,495.6 365.5,490.7 355.5,486.3 345.9,480.8 339.4,475.8 334.2,470.9 330.9,467.2 326.3,461 320.8,451 316.9,441.1 314,431.2 310.7,416.4 308.3,401.5 306,381.7 304,356.9 302.6,332.1 300.7,277.6 299.7,193.4 299.3,59.6M461.9,59.6 462.2,124 463.2,168.6 465.1,203.3 468,228.1 469.8,238 472.1,247.9 475.1,257.8 479.2,267.7 483.5,275.4 488.4,282.4 493,287.5 498.6,292.5 505.6,297.4 513,301.5 517.9,303.7 527.7,307.4 537.6,310.2 547.4,312.4 562.2,314.9 576.9,316.7 611.4,319.2 650.7,320.6 704.9,321.5 788.5,321.9"/>
<path fill="none" stroke="#ffef00" stroke-opacity="0.65" stroke-width="0.9" d="M788.5,512.1 576.9,511.8 517.9,511.1 478.5,510.1 444.1,508.4 412.2,505.6 385.1,501.1 364.6,495.6 352.2,490.7 345.7,487.3 335.9,480.8 330.9,476.6 325.5,470.9 321.7,465.9 316.2,456.7 313.5,451 309.8,441.1 307,431.2 304.8,421.3 302.3,406.5 298.9,376.7 296.5,343.7M486.8,59.6 487.4,119.1 488.6,158.7 490.6,188.4 493.9,213.2 495.9,223.1 498.6,233 502.1,242.9 504.3,247.9 508.1,254.8 513,261.9 518.1,267.7 523.7,272.7 530.7,277.6 537.6,281.5 542.5,283.8 552.5,287.5 562.2,290.3 572,292.6 586.8,295.1 601.5,296.9 631.1,299.2 670.4,300.8 719.6,301.7 788.5,302.2"/>
<path fill="none" stroke="#ff9f00" stroke-opacity="0.65" stroke-width="0.9" d="M788.5,515.3 586.8,515 532.7,514.5 488.4,513.6 453.9,512.3 425.9,510.5 399.8,507.5 380.1,504.1 365.4,500.4 351.7,495.6 345.7,492.8 340.8,490.3 333.6,485.7 327.3,480.8 321.1,474.5 316.2,468.1 311.8,461 306.3,449 303.7,441.1 301,431.2 296.5,407M514,59.6 514.7,109.2 516.1,143.8 518,168.6 519.8,183.5 521.5,193.4 523.7,203.3 526.5,213.2 528.3,218.2 532.7,228.1 537.6,236.1 542.5,242.5 547.4,247.5 552.3,251.6 561.8,257.8 567.1,260.4 572.4,262.8 581.9,266.1 591.7,268.8 601.5,270.9 621.2,273.9 650.7,276.7 685.2,278.4 729.5,279.4 788.5,280"/>
<path fill="none" stroke="#ff5000" stroke-opacity="0.65" stroke-width="0.9" d="M788.5,518.1 591.7,517.8 498.2,516.8 463.8,515.8 439.2,514.6 409.7,512.1 390,509.5 369.7,505.6 353.1,500.6 340.8,495.4 332.5,490.7 325.5,485.7 320,480.8 315.5,475.8 311.7,470.9 308.5,465.9 305.8,461 301.5,451 296.5,434.6M545,59.6 546,99.2 547.5,129 550.1,153.7 553.6,173.6 557.7,188.4 561.6,198.3 564.1,203.3 567.1,208.5 572,215.2 576.9,220.5 581.9,224.9 586.8,228.5 594.4,233 606.5,238.3 621.7,242.9 631.1,245 645.8,247.5 670.4,250.2 699.9,252.1 739.3,253.4 788.5,254.2"/>
<path fill="none" stroke="#ef0000" stroke-opacity="0.65" stroke-width="0.9" d="M788.5,521 601.5,520.7 498.2,519.6 458.9,518.4 424.4,516.6 390,512.7 375.2,510.2 355.5,505.3 340.8,499.8 332.5,495.6 326,491.6 318.6,485.7 313.6,480.8 309.4,475.8 305.9,470.9 303,465.9 300.5,461 296.5,451.2M582.5,59.6 583.8,89.3 585.9,114.1 588.7,133.9 592,148.8 596.6,162.8 601.8,173.6 608.5,183.5 612.9,188.4 618.4,193.4 626.1,198.9 634.2,203.3 640.9,206.2 655.7,211 665.5,213.3 675.3,215.2 695,217.9 719.6,220 749.1,221.5 788.5,222.6"/>
<path fill="none" stroke="#8f0000" stroke-opacity="0.65" stroke-width="0.9" d="M788.5,525.4 439.2,525.4 434.3,520.4 385.1,520.4 380.1,515.5 360.5,515.5 355.5,510.5 345.7,510.5 340.8,505.6 335.9,505.5 330.9,500.6 326,500.6 316.2,490.7 311.3,490.7 306.3,485.7 306.3,480.8 296.5,470.9 296.5,465.9M645.8,59.6 645.8,69.5 650.7,74.5 650.7,94.3 655.7,99.2 655.7,109.2 660.6,114.1 660.6,119.1 665.5,124 665.5,129 680.3,143.8 685.2,143.8 690.1,148.8 695,148.8 699.9,153.7 704.9,153.7 709.8,158.7 724.5,158.7 729.5,163.7 763.9,163.7 768.8,168.6 788.5,168.6"/>
</g>
</g>
<circle cx="356.6" cy="229.9" r="3.3" fill="#000"/>
</svg>
<!-- left UI -->
<div class="abs panel" style="left:19px;top:63px;width:112px;height:153px"></div>
<div class="abs ptitle" style="left:49px;top:59px">Atom Types</div>
<div class="abs lbl" style="left:60px;top:82px;">Atom A</div>
<div class="abs pop" style="left:31px;top:96px;width:90px;height:16px"><span class="abs" style="left:2px;top:3px">hydrogen</span><div class="arr"><svg class="abs" style="right:3px;top:5px" width="7" height="5" viewBox="0 0 7 5"><path d="M0.7,1 L3.5,3.8 L6.3,1" fill="none" stroke="#646464" stroke-width="1.2"/></svg></div></div>
<div class="abs lbl" style="left:61px;top:127px;">Atom B</div>
<div class="abs pop" style="left:30px;top:141px;width:90px;height:16px"><span class="abs" style="left:2px;top:3px">hydrogen</span><div class="arr"><svg class="abs" style="right:3px;top:5px" width="7" height="5" viewBox="0 0 7 5"><path d="M0.7,1 L3.5,3.8 L6.3,1" fill="none" stroke="#646464" stroke-width="1.2"/></svg></div></div>
<div class="abs lbl" style="left:61px;top:174px;">Atom C</div>
<div class="abs pop" style="left:31px;top:186px;width:90px;height:16px"><span class="abs" style="left:2px;top:3px">fluorine</span><div class="arr"><svg class="abs" style="right:3px;top:5px" width="7" height="5" viewBox="0 0 7 5"><path d="M0.7,1 L3.5,3.8 L6.3,1" fill="none" stroke="#646464" stroke-width="1.2"/></svg></div></div>

<div class="abs" style="left:142px;top:61px;width:95px;height:49px;background:#e5f1fb;border:1px solid #5ea6e6;box-shadow:inset 1px 1px 0 #a6b8ca, inset -1px -1px 0 #8fb8e0"></div>
<div class="abs lbl" style="left:175px;top:81px;">Update</div>

<div class="abs panel" style="left:142px;top:122px;width:96px;height:36px"></div>
<div class="abs ptitle" style="left:144px;top:117px">Delta Value</div>
<div class="abs edit" style="left:150px;top:130px;width:81px;height:22px;line-height:20px">0.424</div>

<div class="abs" style="left:143px;top:164px;width:95px;height:53px;background:#fff"></div>
<div class="abs panel" style="left:143px;top:169px;width:95px;height:48px"></div>
<div class="abs ptitle" style="left:145px;top:165px;background:#fff">Calculation Type</div>
<div class="abs" style="left:151px;top:196px;width:61px;height:13px;background:#f0f0f0"></div>
<div class="abs" style="left:152px;top:180px;width:12px;height:12px;border:1px solid #333;border-radius:50%;background:#fff"></div>
<div class="abs" style="left:155px;top:183px;width:6px;height:6px;border-radius:50%;background:#222"></div>
<div class="abs lbl" style="left:166px;top:181px;">Dynamics</div>
<div class="abs" style="left:152px;top:197px;width:12px;height:12px;border:1px solid #333;border-radius:50%;background:#fff"></div>
<div class="abs lbl" style="left:166px;top:198px;">MEP</div>

<div class="abs panel" style="left:19px;top:230px;width:111px;height:35px"></div>
<div class="abs ptitle" style="left:22px;top:226px">Steps</div>
<div class="abs edit" style="left:32px;top:240px;width:83px;height:17px;line-height:15px">500</div>

<div class="abs panel" style="left:142px;top:230px;width:98px;height:36px"></div>
<div class="abs ptitle" style="left:144px;top:225px">Cutoff (Kcal/ mol)</div>
<div class="abs edit" style="left:155px;top:239px;width:76px;height:20px;line-height:18px">-20</div>

<div class="abs panel" style="left:17px;top:276px;width:224px;height:39px"></div>
<div class="abs ptitle" style="left:20px;top:271px">Collision Angle</div>
<div class="abs" style="left:27px;top:283px;width:196px;height:21px;background:#f0f0f0"></div>
<div class="abs" style="left:36px;top:283px;width:162px;height:20px;background:#e6e6e6;border-top:1px solid #a8a8a8"></div>
<div class="abs" style="left:27px;top:303px;width:196px;height:1px;background:#9e9e9e"></div>
<div class="abs" style="left:27px;top:283px;width:9px;height:20px;background:#f2f2f2;border-right:1px solid #8e8e8e"></div>
<div class="abs" style="left:30px;top:290.5px;width:0;height:0;border-top:2.5px solid transparent;border-bottom:2.5px solid transparent;border-right:2.5px solid #555"></div>
<div class="abs" style="left:198px;top:283px;width:16px;height:20px;background:#f0f0f0;border-right:1px solid #8e8e8e"></div>
<div class="abs" style="left:214px;top:283px;width:9px;height:20px;background:#f0f0f0;border-right:1px solid #8e8e8e"></div>
<div class="abs" style="left:217px;top:290.5px;width:0;height:0;border-top:2.5px solid transparent;border-bottom:2.5px solid transparent;border-left:2.5px solid #555"></div>
<div class="abs" style="left:232px;top:283px;width:9px;height:21px;background:#fff;border:1px solid #c9c9c9;border-right:none"></div>

<div class="abs panel" style="left:18px;top:331px;width:224px;height:102px"></div>
<div class="abs ptitle" style="left:95px;top:327px">Initial Conditions</div>
<div class="abs lbl" style="left:41px;top:341px;">AB Distance (A)</div>
<div class="abs lbl" style="left:157px;top:341px;">AB Momentum</div>
<div class="abs edit" style="left:27px;top:358px;width:92px;height:19px;line-height:17px">0.742005</div>
<div class="abs edit" style="left:138px;top:358px;width:92px;height:19px;line-height:17px">0.0</div>
<div class="abs lbl" style="left:39px;top:387px;">BC Distance (A)</div>
<div class="abs lbl" style="left:154px;top:387px;">BC Momentum</div>
<div class="abs edit" style="left:26px;top:403px;width:92px;height:19px;line-height:17px">1.8125</div>
<div class="abs edit" style="left:138px;top:403px;width:92px;height:19px;line-height:17px">0.0</div>

<div class="abs list" style="left:17px;top:445px;width:223px;height:119px;overflow:hidden">
<div class="abs" style="left:0;top:11px;width:207px;height:11px;background:#aaaaaa"></div>
<div class="li" style="top:0.50px">Contour Plot</div>
<div class="li" style="top:11.83px">Surface Plot</div>
<div class="li" style="top:23.16px">Internuclear Distances vs Time</div>
<div class="li" style="top:34.49px">Potential Energy vs Time</div>
<div class="li" style="top:45.82px">Kinetic Energy vs Time</div>
<div class="li" style="top:57.15px">Internuclear Velocities vs Internuclear Distance</div>
<div class="li" style="top:68.48px">Internuclear Accelerations vs Internuclear Distance</div>
<div class="li" style="top:79.81px">Internuclear Momenta vs Internuclear Distance</div>
<div class="li" style="top:91.14px">Internulear Velocities vs Time</div>
<div class="li" style="top:102.47px">Internuclear Acceleration vs Time</div>
<div class="li" style="top:113.80px">Internuclear Momenta vs Time</div>
<div class="abs" style="left:207px;top:0;width:15px;height:117px;background:#f0f0f0"></div>
<div class="abs" style="left:208px;top:15px;width:13px;height:77px;background:#cdcdcd"></div>
<svg class="abs" style="left:210px;top:6px" width="9" height="6" viewBox="0 0 9 6"><path d="M1,4.8 L4.5,1.3 L8,4.8" fill="none" stroke="#606060" stroke-width="1.2"/></svg>
<svg class="abs" style="left:210px;top:107px" width="9" height="6" viewBox="0 0 9 6"><path d="M1,1.2 L4.5,4.7 L8,1.2" fill="none" stroke="#606060" stroke-width="1.2"/></svg>
</div>

<!-- axis labels -->
<div class="abs tick" style="left:277px;top:54px">2.5</div>
<div class="abs tick" style="left:284px;top:178px">2</div>
<div class="abs tick" style="left:277px;top:302px">1.5</div>
<div class="abs tick" style="left:284px;top:425px">1</div>
<div class="abs tick" style="left:277px;top:550px">0.5</div>
<div class="abs tick" style="left:289px;top:561px">0.5</div>
<div class="abs tick" style="left:416px;top:561px">1</div>
<div class="abs tick" style="left:534px;top:561px">1.5</div>
<div class="abs tick" style="left:658px;top:561px">2</div>
<div class="abs tick" style="left:780px;top:561px">2.5</div>
<div class="abs" style="left:167px;top:300px;width:200px;height:16px;transform:rotate(-90deg);text-align:center;font-family:'Liberation Serif',serif;font-size:14px;line-height:16px;white-space:nowrap;color:#262626">B-C bond distance (&Aring;)</div>
<div class="abs" style="left:442.5px;top:575px;width:200px;height:16px;text-align:center;font-family:'Liberation Serif',serif;font-size:14px;line-height:16px;white-space:nowrap;color:#262626">A-B bond distance (&Aring;)</div>
</body></html>
